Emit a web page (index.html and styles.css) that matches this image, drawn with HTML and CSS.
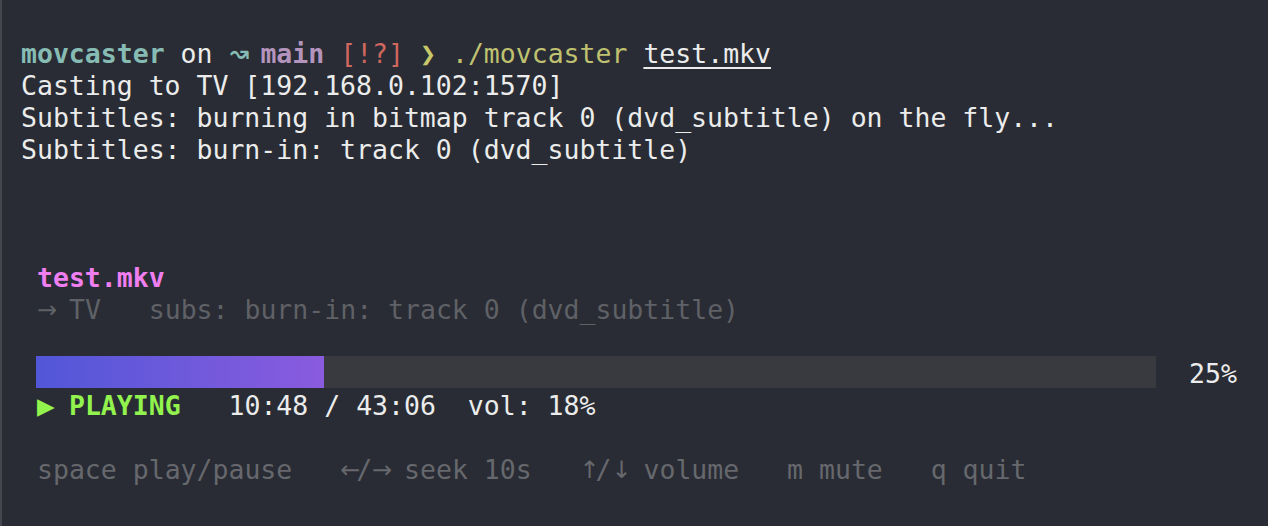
FILE: index.html
```html
<!DOCTYPE html>
<html>
<head>
<meta charset="utf-8">
<link rel="stylesheet" href="styles.css">
</head>
<body>
<div class="term">
  <div class="line"><span class="dir">movcaster</span> on <span class="git-icon">↝</span> <span class="branch">main</span> <span class="status">[!?]</span> <span class="chev">❯</span> <span class="cmd">./movcaster</span> <span class="arg">test.mkv</span></div>
  <div class="line">Casting to TV [192.168.0.102:1570]</div>
  <div class="line">Subtitles: burning in bitmap track 0 (dvd_subtitle) on the fly...</div>
  <div class="line">Subtitles: burn-in: track 0 (dvd_subtitle)</div>
  <div class="line"> </div>
  <div class="line"> </div>
  <div class="line"> </div>
  <div class="panel">
    <div class="line title">test.mkv</div>
    <div class="line dim"><span class="arr">→</span> TV   subs: burn-in: track 0 (dvd_subtitle)</div>
    <div class="line"> </div>
    <div class="progress-row">
      <div class="bar"><div class="fill" style="width: 25.7%"></div></div>
      <span class="pct">25%</span>
    </div>
    <div class="line"><span class="state"><span class="tri">▶</span> PLAYING</span>   10:48 / 43:06  vol: 18%</div>
    <div class="line"> </div>
    <div class="line help">space play/pause   <span class="arr">←</span>/<span class="arr">→</span> seek 10s   <span class="arr">↑</span>/<span class="arr">↓</span> volume   m mute   q quit</div>
  </div>
</div>
</body>
</html>
```

FILE: styles.css
```css
html, body {
  margin: 0;
  padding: 0;
  background: #292c34;
  height: 100%;
}
body {
  border-left: 2px solid #44464d;
  box-sizing: border-box;
}
.term {
  padding: 38px 0 0 19px;
  font-family: "DejaVu Sans Mono", "Liberation Mono", monospace;
  font-size: 26.5px;
  line-height: 32px;
  color: #ececec;
}
.line {
  height: 32px;
  white-space: pre;
}
.dir { color: #86bcb4; font-weight: bold; }
.git-icon {
  color: #86bcb4;
  display: inline-block;
  width: 16px;
  text-align: center;
  font-size: 36px;
  line-height: 32px;
  vertical-align: top;
}
.branch { color: #b494bd; font-weight: bold; }
.status { color: #d0675f; }
.chev { color: #c8c86a; font-weight: bold; }
.cmd { color: #c0c170; }
.arg { text-decoration: underline; text-underline-offset: 4px; }
.panel {
  padding-left: 16px;
}
.title { color: #ef7ff0; font-weight: bold; }
.dim { color: #5f6166; }
.arr {
  display: inline-block;
  width: 16px;
  text-align: center;
  font-family: "DejaVu Sans", sans-serif;
  font-size: 24px;
  line-height: 32px;
  height: 32px;
  vertical-align: top;
}
.progress-row {
  display: flex;
  align-items: center;
  height: 32px;
  margin-left: -1px;
  white-space: pre;
}
.bar {
  width: 1120px;
  height: 32px;
  background: #393a40;
  margin-top: -4px;
}
.fill {
  height: 100%;
  background: linear-gradient(to right, #5157d8, #8a5bde);
}
.pct {
  margin-left: 33px;
}
.state { color: #92f24e; font-weight: bold; }
.tri {
  display: inline-block;
  width: 16px;
  font-family: "DejaVu Sans", sans-serif;
  font-size: 23px;
  line-height: 32px;
  height: 32px;
  vertical-align: top;
}
.help { color: #66686d; }
```
